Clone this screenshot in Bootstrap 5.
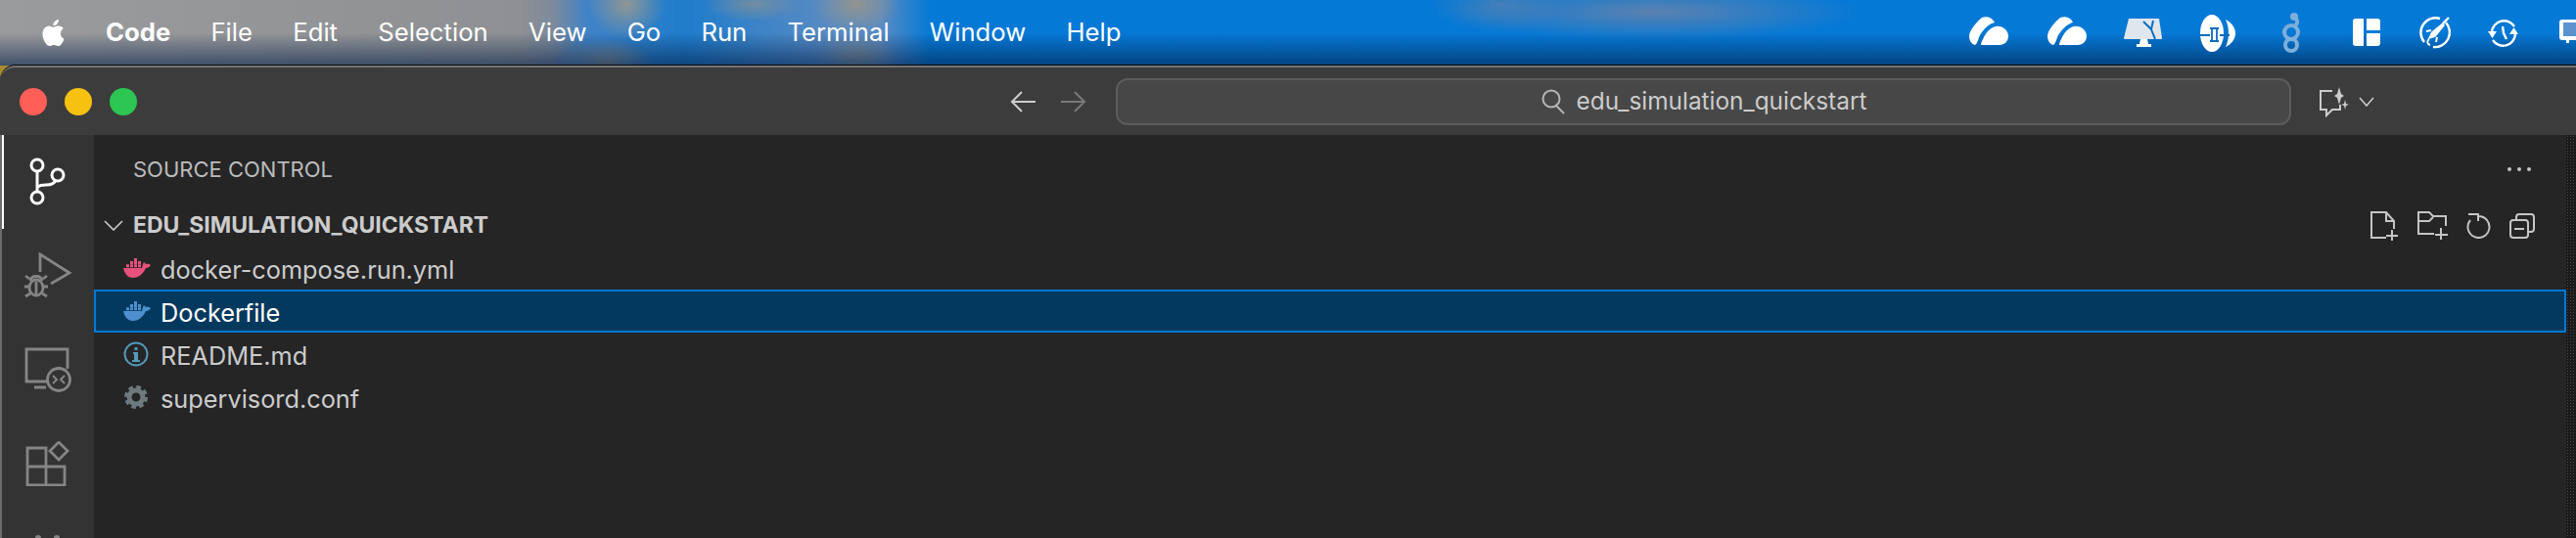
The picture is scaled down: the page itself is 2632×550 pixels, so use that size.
<!DOCTYPE html>
<html lang="en">
<head>
  <meta charset="UTF-8" />
  <title>Source Control</title>
  <link href="https://cdn.jsdelivr.net/npm/bootstrap@5.3.3/dist/css/bootstrap.min.css" rel="stylesheet">
  <style>
    html, body { height: 550px; overflow: hidden; }
    body { background: #252526; font-family: Inter, "Liberation Sans", sans-serif; }

    /* mac menu bar */
    .menu-bar {
      height: 67px;
      padding-left: 41px;
      color: #fff;
      font-size: 25.7px;
      background:
        linear-gradient(to bottom, transparent 50%, rgba(2, 30, 70, .6) 100%),
        radial-gradient(ellipse 210px 30px at 1690px 12px, rgba(150, 135, 150, .6), transparent),
        radial-gradient(ellipse 70px 30px at 1530px 4px, rgba(150, 135, 150, .35), transparent),
        radial-gradient(ellipse 45px 30px at 875px 4px, rgba(160, 150, 130, .8), transparent),
        radial-gradient(ellipse 40px 24px at 875px 58px, rgba(160, 150, 130, .6), transparent),
        radial-gradient(ellipse 50px 18px at 770px 4px, rgba(160, 150, 130, .55), transparent),
        radial-gradient(ellipse 40px 36px at 640px 4px, rgba(160, 155, 140, .85), transparent),
        radial-gradient(ellipse 48px 24px at 620px 64px, rgba(160, 150, 130, .8), transparent),
        linear-gradient(to right, #9a9b9d 0, #8e9093 530px, #7d8a9c 565px, #3f83c8 600px, #1f7ccb 700px, #5a8bc3 850px, #5a8bc3 900px, #0579d6 950px);
    }
    .menu-items { gap: 41.2px; margin-left: 40px; }
    .tray-box { position: relative; width: 632px; height: 67px; margin-left: auto; flex: none; }
    .tray-box svg { position: absolute; top: 0; left: 0; }

    /* window */
    .win-edge { background: #a98a2c; }
    .title-bar {
      height: 71px;
      background: #3c3c3c;
      border-top: 2px solid #757575;
      border-top-left-radius: 16px;
      box-shadow: 0 -1px 0 #0a0a0a;
      padding-left: 20px;
    }
    .light { width: 28px; height: 28px; border-radius: 50%; margin-right: 18px; }
    .nav-arrows { margin-left: 874px; gap: 26px; width: 108px; flex: none; }
    .search-box {
      width: 1201px;
      height: 48px;
      flex: none;
      background: #474747;
      border: 2px solid #5b5c5e;
      border-radius: 12px;
      color: #ccc;
      font-size: 24.4px;
      gap: 11px;
    }
    .chat-btn { margin-left: 28px; gap: 9px; }

    /* body */
    .main-area { height: 412px; }
    .activity-bar {
      width: 96px;
      flex: none;
      background: #333;
      border-left: 2px solid #6b6c6e;
      position: relative;
      overflow: hidden;
    }
    .activity-item { height: 96px; }
    .activity-cut { padding-top: 24px; }
    .activity-on { position: absolute; left: -2px; top: 0; width: 4px; height: 96px; background: #fff; }
    .side-bar { flex: 1; background: #252526; color: #ccc; position: relative; min-width: 0; }
    .side-title { height: 70px; padding-left: 40px; padding-right: 36px; font-size: 22px; color: #bbb; }
    .more-dots { gap: 6px; }
    .more-dots i { width: 4px; height: 4px; border-radius: 50%; background: #c5c5c5; }
    .repo-head { height: 44px; padding-left: 10px; padding-top: 1px; font-size: 23px; font-weight: 700; color: #ccc; }
    .repo-chevron { margin-right: 10px; }
    .repo-tools { margin-left: auto; margin-right: 32px; gap: 18px; }
    .file-list { --bs-list-group-bg: transparent; --bs-list-group-border-width: 0; border-radius: 0; }
    .file-row {
      height: 44px;
      padding: 0 0 0 28px;
      background: transparent;
      color: #ccc;
      font-size: 25.3px;
      display: flex;
      align-items: center;
      border: 2px solid transparent !important;
    }
    .file-row.file-on { background: #04395e; border-color: #0078d4 !important; color: #fff; }
    .file-icon { width: 31px; margin-right: 7px; flex: none; display: flex; justify-content: flex-start; }
    .scroll-strip {
      width: 10px;
      flex: none;
      background-color: #1b1b1c;
      background-image: radial-gradient(#4a4a4b 1px, transparent 1px);
      background-size: 3px 3px;
    }
  </style>
</head>
<body>
  <!-- menu bar -->
  <div class="menu-bar d-flex align-items-center">
    <svg width="27" height="31" viewBox="0 0 16 16" fill="#fff"><path d="M11.182.008C11.148-.03 9.923.023 8.857 1.18c-1.066 1.156-.902 2.482-.878 2.516.024.034 1.52.087 2.475-1.258.955-1.345.762-2.391.728-2.43zm3.314 11.733c-.048-.096-2.325-1.234-2.113-3.422.212-2.189 1.675-2.789 1.698-2.854.023-.065-.597-.79-1.254-1.157a3.692 3.692 0 0 0-1.563-.434c-.108-.003-.483-.095-1.254.116-.508.139-1.653.589-1.968.607-.316.018-1.256-.522-2.267-.665-.647-.125-1.333.131-1.824.328-.49.196-1.422.754-2.074 2.237-.652 1.482-.311 3.83-.067 4.56.244.729.625 1.924 1.273 2.796.576.984 1.34 1.667 1.659 1.899.319.232 1.219.386 1.843.067.502-.308 1.408-.485 1.766-.472.357.013 1.061.154 1.782.539.571.197 1.111.115 1.652-.105.541-.221 1.324-1.059 2.238-2.758.347-.79.505-1.217.473-1.282z"/></svg>
    <div class="menu-items d-flex">
      <span class="fw-bold">Code</span><span>File</span><span>Edit</span><span>Selection</span><span>View</span><span>Go</span><span>Run</span><span>Terminal</span><span>Window</span><span>Help</span>
    </div>
    <div class="tray-box">
      <!-- tray icons sit on their own little canvas -->
      <svg width="632" height="67" viewBox="2000 0 632 67" fill="#fff">
        <path d="M2012 37c0-6 8-15 13-19 5-2 11 0 13 5-5 1-12 7-16 15-1 4-3 8-4 8-4-1-6-5-6-9z"/>
        <path d="M2026 40c3-7 8-12 13-13 7-1 13 4 13 10 0 5-4 9-9 9h-19c0-2 1-4 2-6z"/>
        <g transform="translate(80 0)">
          <path d="M2012 37c0-6 8-15 13-19 5-2 11 0 13 5-5 1-12 7-16 15-1 4-3 8-4 8-4-1-6-5-6-9z"/>
          <path d="M2026 40c3-7 8-12 13-13 7-1 13 4 13 10 0 5-4 9-9 9h-19c0-2 1-4 2-6z"/>
        </g>
        <path d="M2175 19h31l3 20c0 1-1 1-2 1h-35c-1 0-2 0-2-1z" fill="#dfe6ee"/>
        <path d="M2187 40h7l1 5h3v3h-15v-3h3z"/>
        <path d="M2190 22l8 8 2-9M2198 30l4 10" stroke="#0a6cc0" stroke-width="2" fill="none"/>
        <ellipse cx="2260" cy="34" rx="12" ry="19"/>
        <path d="M2274 20c6 3 10 8 10 14s-4 11-10 14c2-4 3-9 3-14s-1-10-3-14z"/>
        <path d="M2248 36h10M2268 36h10M2258 29h9M2258 42h9M2260 29v13M2265 29v13" stroke="#0a6cc0" stroke-width="1.8"/>
        <g fill="none" stroke="#7eaedb" stroke-width="4">
          <circle cx="2341" cy="46" r="6"/><circle cx="2341" cy="33" r="7"/>
          <path d="M2345 26c3-2 3-5 0-8"/>
        </g>
        <circle cx="2344" cy="17" r="4" fill="#7eaedb"/>
        <path d="M2407 19h8v28h-8c-2 0-3-1-3-3v-22c0-2 1-3 3-3zM2418 19h11c2 0 3 1 3 3v9h-14zM2418 34h14v10c0 2-1 3-3 3h-11z"/>
        <!-- rocket in a ring -->
        <g fill="none" stroke="#fff" stroke-width="2.4">
          <path d="M2499 23a15 15 0 0 1-13 25M2477 43a15 15 0 0 1 16-24"/>
          <path d="M2502 18l-6 6"/>
          <path d="M2496 24l-11 9-3 6 6-2 9-11z" fill="#fff" stroke-width="1.5"/>
          <path d="M2484 31l-5 1M2490 38l-1 5M2482 40c-3 2-2 5 1 6" stroke-width="2"/>
        </g>
        <!-- time machine -->
        <g fill="none" stroke="#fff" stroke-width="2.4">
          <path d="M2546 33a12.500 12.500 0 0 1 23-6M2570 35a12.500 12.500 0 0 1-23 6"/>
          <path d="M2557 27l1 7 3 6"/>
        </g>
        <path d="M2542 32h9l-4.500 7zM2564 35h9l-4.500-7z"/>
        <path d="M2618 20h14v21h-7v3h-3v-3h-4c-2 0-3-1-3-3v-15c0-2 1-3 3-3z"/>
        <rect x="2619" y="23" width="13" height="14" fill="#5b93cf"/>
      </svg>
    </div>
  </div>

  <div class="win-edge">
    <!-- title bar -->
    <div class="title-bar d-flex align-items-center">
      <span class="light" style="background:#ff5f57"></span>
      <span class="light" style="background:#f6c20f"></span>
      <span class="light" style="background:#2dc653"></span>
      <div class="nav-arrows d-flex align-items-center">
        <svg width="26" height="24" viewBox="0 0 26 24" fill="none" stroke="#ccc" stroke-width="2"><path d="M12 2 2 12l10 10M2 12h24"/></svg>
        <svg width="26" height="24" viewBox="0 0 26 24" fill="none" stroke="#777a7d" stroke-width="2"><path d="M14 2l10 10-10 10M24 12H0"/></svg>
      </div>
      <div class="search-box d-flex align-items-center justify-content-center">
        <svg width="26" height="26" viewBox="0 0 26 26" fill="none" stroke="#b5b5b5" stroke-width="2"><circle cx="11" cy="10" r="8.500"/><path d="M16 17l8 8"/></svg>
        <span>edu_simulation_quickstart</span>
      </div>
      <div class="chat-btn d-flex align-items-center">
        <svg width="32" height="32" viewBox="0 0 32 32" fill="none" stroke="#ccc" stroke-width="2"><path d="M14 5H2v19h6v6l6-6h8v-5"/><path d="M21 1l2 7 3 2-3 2-2 7-2-7-3-2 3-2z" fill="#ccc" stroke="none"/><path d="M27 14l1 4 3 1-3 1-1 4-1-4-3-1 3-1z" fill="#ccc" stroke="none"/></svg>
        <svg width="16" height="10" viewBox="0 0 16 10" fill="none" stroke="#ccc" stroke-width="1.6"><path d="M1 1l7 8 7-8"/></svg>
      </div>
    </div>
  </div>

  <div class="main-area d-flex">
    <div class="activity-bar">
      <span class="activity-on"></span>
      <div class="activity-item d-flex justify-content-center align-items-center">
        <svg width="40" height="50" viewBox="0 0 40 50" fill="none" stroke="#fff" stroke-width="3"><circle cx="9" cy="8" r="6"/><circle cx="30" cy="18" r="6"/><circle cx="9" cy="41" r="6"/><path d="M9 14v21M9 31c2-3 5-3 9-3 6 0 9-2 10-5"/></svg>
      </div>
      <div class="activity-item d-flex justify-content-center align-items-center">
        <svg width="50" height="48" viewBox="0 0 50 48" fill="none" stroke="#858585" stroke-width="2.8"><path d="M17 20V2l30 19-19 11"/><ellipse cx="13" cy="36" rx="7" ry="8"/><path d="M7 29c1-6 11-6 12 0M6 35H1M25 35h-5M6 27l-4-3M20 27l4-3M7 42l-5 3M19 42l5 3M13 30v14"/></svg>
      </div>
      <div class="activity-item d-flex justify-content-center align-items-center">
        <svg width="48" height="46" viewBox="0 0 48 46" fill="none" stroke="#858585" stroke-width="2.8"><path d="M24 35H2V2h42v20M10 41h12"/><circle cx="35" cy="33" r="11.500"/><path d="M29 29l4 4-4 4M41 29l-4 4 4 4" stroke-width="2"/></svg>
      </div>
      <div class="activity-item d-flex justify-content-center align-items-center">
        <svg width="46" height="46" viewBox="0 0 46 46" fill="none" stroke="#858585" stroke-width="2.8"><path d="M2 7h19v19H2zM2 26h19v19H2zM21 26h19v19H21z"/><path d="M34 1l9 9-9 9-9-9z"/></svg>
      </div>
      <div class="activity-cut d-flex justify-content-center">
        <svg width="30" height="8" viewBox="0 0 30 8" fill="#858585"><circle cx="5" cy="4" r="3"/><circle cx="24" cy="4" r="3"/></svg>
      </div>
    </div>

    <div class="side-bar">
      <div class="side-title d-flex align-items-center justify-content-between">
        <span>SOURCE CONTROL</span>
        <span class="more-dots d-flex"><i></i><i></i><i></i></span>
      </div>
      <div class="repo-head d-flex align-items-center">
        <svg class="repo-chevron" width="20" height="11" viewBox="0 0 20 11" fill="none" stroke="#ccc" stroke-width="1.6"><path d="M1 1l9 9 9-9"/></svg>
        <span>EDU_SIMULATION_QUICKSTART</span>
        <div class="repo-tools d-flex align-items-center">
          <svg width="30" height="30" viewBox="0 0 30 30" fill="none" stroke="#c5c5c5" stroke-width="2"><path d="M16 27H1V1h15l8 9v8M16 1v9h8M22 19v11M16 25h12"/></svg>
          <svg width="32" height="30" viewBox="0 0 32 30" fill="none" stroke="#c5c5c5" stroke-width="2"><path d="M17 23H1V1h11l4 4h13v10M1 10h11l4-4M24 17v12M18 24h13"/></svg>
          <svg width="26" height="26" viewBox="0 0 26 26" fill="none" stroke="#c5c5c5" stroke-width="2"><path d="M4 7a11 11 0 1 0 8-4M2 1h10v7"/></svg>
          <svg width="26" height="26" viewBox="0 0 26 26" fill="none" stroke="#c5c5c5" stroke-width="2"><rect x="1" y="7" width="18" height="18" rx="3"/><path d="M7 7V4c0-2 1-3 3-3h12c2 0 3 1 3 3v12c0 2-1 3-3 3h-3M5 16h10"/></svg>
        </div>
      </div>
      <div class="list-group file-list">
        <div class="list-group-item file-row">
          <span class="file-icon"><svg width="28" height="20" viewBox="0 0 28 20" fill="#e8517c"><path d="M0 10h19c.6-2 .8-4 2-6l2 2c2-.6 3.600-.2 5 1-1 2-3 3-5 3-2 5-7 10-13 10S1 15 0 10z"/><path d="M3 6.300h3v3H3zM7 6.300h3v3H7zM11 6.300h3v3h-3zM15 6.300h3v3h-3zM7 3h3v3H7zM11 3h3v3h-3zM15 3h3v3h-3zM11 0h3v3h-3z"/></svg></span>
          <span class="pt-1">docker-compose.run.yml</span>
        </div>
        <div class="list-group-item file-row file-on">
          <span class="file-icon"><svg width="28" height="20" viewBox="0 0 28 20" fill="#4d8fcf"><path d="M0 10h19c.6-2 .8-4 2-6l2 2c2-.6 3.600-.2 5 1-1 2-3 3-5 3-2 5-7 10-13 10S1 15 0 10z"/><path d="M3 6.300h3v3H3zM7 6.300h3v3H7zM11 6.300h3v3h-3zM15 6.300h3v3h-3zM7 3h3v3H7zM11 3h3v3h-3zM15 3h3v3h-3zM11 0h3v3h-3z"/></svg></span>
          <span class="pt-1">Dockerfile</span>
        </div>
        <div class="list-group-item file-row">
          <span class="file-icon"><svg width="26" height="26" viewBox="0 0 26 26" fill="#519aba"><circle cx="13" cy="13" r="11.500" fill="none" stroke="#519aba" stroke-width="2"/><circle cx="13" cy="7.500" r="1.800"/><path d="M10 11h5v8h2v2H9v-2h2v-6h-1z"/></svg></span>
          <span class="pt-1">README.md</span>
        </div>
        <div class="list-group-item file-row">
          <span class="file-icon"><svg width="26" height="26" viewBox="0 0 26 26" fill="none" stroke="#6d7a80"><circle cx="13" cy="13" r="7" stroke-width="5"/><circle cx="13" cy="13" r="10" stroke-width="4" stroke-dasharray="4.500 3.350"/></svg></span>
          <span class="pt-1">supervisord.conf</span>
        </div>
      </div>
    </div>
    <div class="scroll-strip"></div>
  </div>

  <script src="https://cdn.jsdelivr.net/npm/bootstrap@5.3.3/dist/js/bootstrap.bundle.min.js"></script>
</body>
</html>
